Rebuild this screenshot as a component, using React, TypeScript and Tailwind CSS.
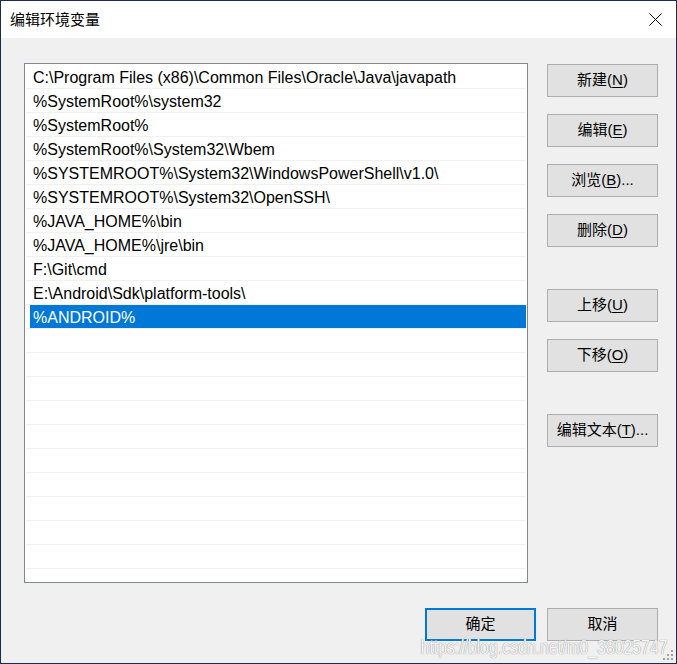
const paths = [
  "C:\\Program Files (x86)\\Common Files\\Oracle\\Java\\javapath",
  "%SystemRoot%\\system32",
  "%SystemRoot%",
  "%SystemRoot%\\System32\\Wbem",
  "%SYSTEMROOT%\\System32\\WindowsPowerShell\\v1.0\\",
  "%SYSTEMROOT%\\System32\\OpenSSH\\",
  "%JAVA_HOME%\\bin",
  "%JAVA_HOME%\\jre\\bin",
  "F:\\Git\\cmd",
  "E:\\Android\\Sdk\\platform-tools\\",
  "%ANDROID%",
];

const selected = 10;

function Btn({ label, hot, tail }: { label: string; hot: string; tail?: string }) {
  return (
    <div className="w-[111px] h-[33px] flex items-center justify-center bg-[#e1e1e1] border border-[#adadad] text-[15px] text-black">
      <span>
        {label}(<span className="underline underline-offset-2">{hot}</span>){tail}
      </span>
    </div>
  );
}

export default function App() {
  const rows = Array.from({ length: 22 }, (_, i) => paths[i] ?? "");
  return (
    <div
      className="relative w-[677px] h-[664px] border border-[#1c2b4e] bg-[#f0f0f0] flex flex-col overflow-hidden"
      style={{ fontFamily: '"Segoe UI", "Liberation Sans", "Noto Sans CJK SC", sans-serif' }}
    >
      {/* title bar */}
      <div className="h-[37px] bg-white flex items-center justify-between pl-[9px] pr-[14px] shrink-0">
        <span className="text-[15px] text-black leading-none">编辑环境变量</span>
        <svg width="13" height="13" viewBox="0 0 13 13">
          <path d="M0.5 0.5 L12.5 12.5 M12.5 0.5 L0.5 12.5" stroke="#000" strokeWidth="1" />
        </svg>
      </div>

      <div className="flex pt-[25px] pl-[23px]">
        {/* list */}
        <div className="w-[504px] h-[520px] border border-[#828790] bg-white pt-[1px] px-[1px] overflow-hidden">
          {rows.map((p, i) => (
            <div key={i} className="h-[24px] flex border-b border-[#f0f0f0]">
              <div
                className={
                  "ml-[4px] flex-1 pl-[3px] pt-[2px] flex items-center text-[16px] whitespace-nowrap " +
                  (i === selected ? "bg-[#0078d7] text-white" : "text-black")
                }
              >
                {p}
              </div>
            </div>
          ))}
        </div>

        {/* side buttons */}
        <div className="ml-[19px] pt-[1px] flex flex-col">
          <div className="flex flex-col gap-[17px]">
            <Btn label="新建" hot="N" />
            <Btn label="编辑" hot="E" />
            <Btn label="浏览" hot="B" tail="..." />
            <Btn label="删除" hot="D" />
          </div>
          <div className="mt-[42px] flex flex-col gap-[17px]">
            <Btn label="上移" hot="U" />
            <Btn label="下移" hot="O" />
          </div>
          <div className="mt-[42px]">
            <Btn label="编辑文本" hot="T" tail="..." />
          </div>
        </div>
      </div>

      {/* bottom buttons */}
      <div className="flex justify-end gap-[11px] pt-[25px] pr-[18px]">
        <div className="w-[111px] h-[33px] flex items-center justify-center bg-[#e1e1e1] border-2 border-[#0078d7] text-[15px] text-black">
          确定
        </div>
        <div className="w-[111px] h-[33px] flex items-center justify-center bg-[#e1e1e1] border border-[#adadad] text-[15px] text-black">
          取消
        </div>
      </div>

      {/* watermark */}
      <div
        className="absolute right-[9px] bottom-[6px] origin-right scale-x-[0.79] text-[20px] text-white/90 leading-none [text-shadow:0_0_1px_#9a9a9a,0_0_1px_#9a9a9a]"
        style={{ fontFamily: '"Liberation Sans", sans-serif' }}
      >
        https://blog.csdn.net/m0_38025747
      </div>

      {/* resize grip */}
      <svg className="absolute right-0 bottom-0" width="16" height="16" viewBox="0 0 16 16">
        <rect x="11" y="3" width="2" height="2" fill="#a0a0a0" />
        <rect x="7" y="7" width="2" height="2" fill="#a0a0a0" />
        <rect x="11" y="7" width="2" height="2" fill="#a0a0a0" />
        <rect x="3" y="11" width="2" height="2" fill="#a0a0a0" />
        <rect x="7" y="11" width="2" height="2" fill="#a0a0a0" />
        <rect x="11" y="11" width="2" height="2" fill="#a0a0a0" />
      </svg>
    </div>
  );
}
